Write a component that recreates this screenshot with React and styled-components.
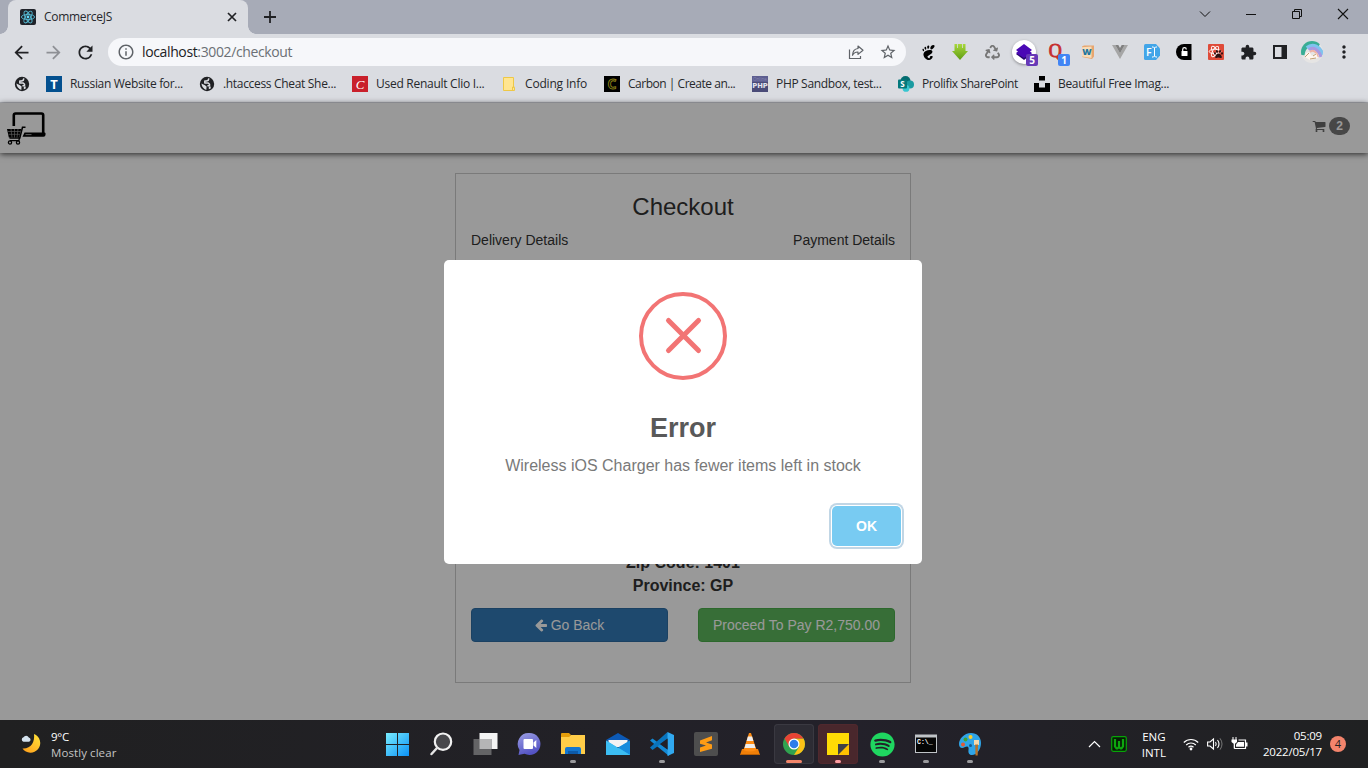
import React from "react";
import styled, { createGlobalStyle } from "styled-components";
import {
  MdArrowBack, MdArrowForward, MdRefresh, MdInfoOutline, MdStarBorder,
  MdExtension, MdMoreVert,
} from "react-icons/md";
import { SiGnome } from "react-icons/si";
import { FaSpotify, FaPaw, FaRecycle } from "react-icons/fa";

const Global = createGlobalStyle`
  * { box-sizing: border-box; }
  body { margin: 0; overflow: hidden; }
  button { font: inherit; }
  svg { display: block; flex: none; overflow: visible; }
`;

const ui = `"Open Sans", "Noto Sans", sans-serif`;
const arial = `"Liberation Sans", Arial, sans-serif`;

const Screen = styled.div`
  width: 100vw;
  height: 768px;
  display: flex;
  flex-direction: column;
  overflow: hidden;
  background: #999;
`;

/* ---------- browser frame ---------- */
const TabStrip = styled.header`
  height: 34px;
  flex: none;
  display: flex;
  padding: 0 2px 0 8px;
  background: #a7abb7;
`;
const Tab = styled.div`
  position: relative;
  width: 240px;
  height: 34px;
  display: flex;
  align-items: center;
  padding: 0 9px 0 12px;
  gap: 8px;
  background: #dadce1;
  border-radius: 8px 8px 0 0;
  &::before, &::after {
    content: "";
    position: absolute;
    bottom: 0;
    width: 8px;
    height: 8px;
  }
  &::before { left: -8px; background: radial-gradient(circle at 0 0, transparent 7.5px, #dadce1 8px); }
  &::after { right: -8px; background: radial-gradient(circle at 100% 0, transparent 7.5px, #dadce1 8px); }
`;
const Label = styled.span`
  font-family: ${ui};
  font-size: ${(p) => p.$size || 12}px;
  letter-spacing: ${(p) => p.$track ?? 0}px;
  line-height: 16px;
  color: ${(p) => p.$color || "#26282c"};
  white-space: nowrap;
`;
const TabTitle = styled(Label)` flex: 1; `;
const NewTab = styled.div`
  width: 44px;
  display: flex;
  align-items: center;
  justify-content: center;
`;
const WindowControls = styled.div`
  margin-left: auto;
  display: flex;
  height: 28px;
`;
const Control = styled.div`
  width: 46px;
  display: flex;
  align-items: center;
  justify-content: center;
`;
const Toolbar = styled.div`
  height: 36px;
  flex: none;
  display: flex;
  align-items: center;
  padding: 0 8px 0 5px;
  background: #dadce1;
  color: #202124;
`;
const NavButton = styled.div`
  width: 32px;
  height: 28px;
  display: flex;
  align-items: center;
  justify-content: center;
  color: ${(p) => (p.$off ? "#8e9095" : "#202124")};
`;
const AddressBar = styled.div`
  width: 798px;
  height: 28px;
  margin-left: 7px;
  padding: 0 2px 0 9px;
  display: flex;
  align-items: center;
  border-radius: 14px;
  background: #f6f7fa;
  color: #5f6368;
`;
const Url = styled.div`
  flex: 1;
  margin-left: 7px;
  font: 14px/20px ${ui};
  letter-spacing: -0.37px;
  color: #6b6f75;
  b { font-weight: 400; color: #202124; }
`;
const Extensions = styled.div`
  display: flex;
  margin-left: 6px;
`;
const Ext = styled.div`
  position: relative;
  width: 32px;
  height: 28px;
  display: flex;
  align-items: center;
  justify-content: center;
  flex: none;
`;
const Badge = styled.span`
  position: absolute;
  left: ${(p) => p.$left}px;
  top: 16px;
  width: 12px;
  height: 12px;
  border-radius: 2px;
  background: ${(p) => p.$color};
  color: #fff;
  font: bold 10px/12px ${ui};
  text-align: center;
`;
const RoundPlate = styled.div`
  width: 24px;
  height: 24px;
  display: flex;
  align-items: center;
  justify-content: center;
  border-radius: 50%;
  background: #fff;
  box-shadow: 0 1px 3px rgba(0, 0, 0, 0.35);
`;
const Bookmarks = styled.nav`
  height: 33px;
  flex: none;
  display: flex;
  align-items: center;
  padding: 0 0 5px 14px;
  background: #dadce1;
  border-bottom: 1px solid #b3b5bb;
`;
const Bookmark = styled.div`
  width: ${(p) => p.$w}px;
  display: flex;
  align-items: center;
  gap: 8px;
  flex: none;
`;

/* ---------- page ---------- */
const Page = styled.main`
  position: relative;
  height: 617px;
  flex: none;
  background: #fff;
  font-family: ${arial};
  color: #333;
`;
const Navbar = styled.div`
  height: 50px;
  display: flex;
  align-items: center;
  justify-content: space-between;
  padding: 0 18px 0 6px;
  background: #fff;
  box-shadow: 0 1px 6px rgba(0, 0, 0, 0.75);
`;
const Cart = styled.div`
  display: flex;
  align-items: center;
  gap: 3px;
  margin-top: -5px;
  color: #6a6a6a;
`;
const CartCount = styled.span`
  width: 21px;
  height: 18px;
  border-radius: 9px;
  background: #777;
  color: #fff;
  font: bold 12px/18px ${arial};
  text-align: center;
`;
const Card = styled.section`
  width: 456px;
  height: 510px;
  margin: 20px 0 0 455px;
  padding: 0 15px 40px;
  display: flex;
  flex-direction: column;
  border: 1px solid #ccc;
`;
const CardTitle = styled.h3`
  margin: 20px 0 10px;
  font-size: 24px;
  font-weight: 400;
  line-height: 26px;
  text-align: center;
`;
const Split = styled.div`
  display: flex;
  justify-content: space-between;
  font-size: 14px;
  line-height: 20px;
`;
const Address = styled.div`
  margin-top: auto;
  margin-bottom: 11px;
  font-size: 16px;
  font-weight: 700;
  line-height: 23px;
  text-align: center;
`;
const PageButton = styled.button`
  width: 197px;
  height: 34px;
  display: flex;
  align-items: center;
  justify-content: center;
  gap: 4px;
  padding: 0;
  border: 1px solid ${(p) => p.$edge};
  border-radius: 4px;
  background: ${(p) => p.$fill};
  color: #fff;
`;
const Overlay = styled.div`
  position: absolute;
  inset: 0;
  display: flex;
  justify-content: center;
  align-items: flex-start;
  padding: 157px 2px 0 0;
  background: rgba(0, 0, 0, 0.4);
`;
const Modal = styled.div`
  width: 478px;
  height: 304px;
  padding: 32px 21px 18px;
  display: flex;
  flex-direction: column;
  align-items: center;
  border-radius: 5px;
  background: #fff;
`;
const ModalTitle = styled.div`
  margin-top: 31px;
  font-size: 27px;
  font-weight: 700;
  line-height: 34px;
  color: #595959;
`;
const ModalText = styled.div`
  margin-top: 11px;
  font-size: 16px;
  line-height: 20px;
  color: #797979;
`;
const OkButton = styled.button`
  width: 69px;
  height: 40px;
  margin-top: auto;
  align-self: flex-end;
  padding: 0;
  border: 0;
  border-radius: 5px;
  background: #78cbf2;
  box-shadow: 0 0 0 1px #fff, 0 0 0 3px rgba(43, 114, 165, 0.29);
  color: #fff;
  font-size: 14px;
  font-weight: 700;
`;

/* ---------- taskbar ---------- */
const Taskbar = styled.footer`
  height: 48px;
  flex: none;
  display: flex;
  align-items: center;
  padding: 0 22px 0 21px;
  background: linear-gradient(90deg, #202021, #222127 45%, #23212a 62%, #202122);
`;
const Weather = styled.div`
  width: 354px;
  display: flex;
  align-items: center;
  gap: 9px;
`;
const Lines = styled.div`
  display: flex;
  flex-direction: column;
  padding-top: ${(p) => p.$drop || 0}px;
  text-align: ${(p) => p.$align || "left"};
`;
const Apps = styled.div` display: flex; `;
const AppSlot = styled.div`
  position: relative;
  width: 44.1px;
  height: 48px;
  display: flex;
  align-items: center;
  justify-content: center;
`;
const AppPlate = styled.div`
  width: 40px;
  height: 40px;
  display: flex;
  align-items: center;
  justify-content: center;
  border-radius: 4px;
  background: ${(p) => p.$fill || "transparent"};
  box-shadow: ${(p) => (p.$edge ? `inset 0 0 0 1px ${p.$edge}` : "none")};
`;
const Mark = styled.i`
  position: absolute;
  bottom: 5px;
  width: ${(p) => p.$w || 6}px;
  height: 3px;
  border-radius: 2px;
  background: ${(p) => p.$color || "#9a9a9d"};
`;
const Tray = styled.div`
  margin-left: auto;
  display: flex;
  align-items: center;
`;
const TrayIcons = styled.div`
  display: flex;
  gap: 8px;
  align-items: center;
  margin: 0 15px 0 17px;
`;
const TraySlot = styled.div`
  margin-right: ${(p) => p.$after}px;
`;
const Notice = styled.div`
  width: 16px;
  height: 16px;
  margin-left: 8px;
  border-radius: 50%;
  background: #f3846c;
  color: #222;
  font: 11px/16px ${ui};
  text-align: center;
`;

/* ---------- drawings ---------- */
const Svg = ({ w = 16, h = w, box, children }) => (
  <svg width={w} height={h} viewBox={box || `0 0 ${w} ${h}`} fill="none">{children}</svg>
);

const ReactMark = () => (
  <Svg>
    <rect width="16" height="16" rx="2" fill="#20232a" />
    <g stroke="#55b9d2" strokeWidth=".9">
      <ellipse cx="8" cy="8" rx="6.6" ry="2.6" />
      <ellipse cx="8" cy="8" rx="6.6" ry="2.6" transform="rotate(60 8 8)" />
      <ellipse cx="8" cy="8" rx="6.6" ry="2.6" transform="rotate(120 8 8)" />
    </g>
    <circle cx="8" cy="8" r="1.4" fill="#61dafb" />
  </Svg>
);
const Globe = () => (
  <Svg>
    <circle cx="8" cy="8" r="7.2" fill="#202124" />
    <path d="M9.800 2.400 9.300 4.200 7.600 5H5.800v1.900h3.400l1.300 1.400v1.500H8.400" stroke="#dadce1" strokeWidth="1.500" strokeLinejoin="round" />
    <path d="M2.400 7.500 6 9.300l1.600 1.300-.3 3.300Q3 12.500 2.400 7.500z" fill="#dadce1" />
    <path d="M9.800 10.500h1.900v1.900l-1.900.9z" fill="#dadce1" />
  </Svg>
);
const LetterTile = ({ fill, color, text, font, weight = 700, size = 13, italic, outline }) => (
  <Svg>
    <rect width="16" height="16" fill={fill} />
    <text x="8" y={outline ? 13 : 12.6} textAnchor="middle" fill={outline ? "none" : color} stroke={outline ? color : "none"} strokeWidth=".9" fontFamily={font || "Open Sans"} fontWeight={weight} fontSize={size} fontStyle={italic ? "italic" : "normal"}>{text}</text>
  </Svg>
);
const Folder = () => (
  <Svg>
    <path d="M2.500 1.500h10v10h1v3h-11z" fill="#ffe591" stroke="#eec846" />
    <path d="M11.500 14v-3h2" stroke="#eec846" />
  </Svg>
);
const PhpTile = () => (
  <Svg>
    <rect width="16" height="16" fill="#4a4b78" />
    <rect width="16" height="6" fill="#5d5e90" />
    <text x="8" y="4.8" textAnchor="middle" fontSize="4.5" fontFamily="Open Sans" fill="#8585b1">Online</text>
    <text x="8" y="12.2" textAnchor="middle" fontSize="6.8" fontWeight="700" fontFamily="DejaVu Sans" fill="#e4e4ef">PHP</text>
  </Svg>
);
const SharePoint = () => (
  <Svg>
    <circle cx="7.5" cy="5" r="5" fill="#036c70" />
    <circle cx="12" cy="8.5" r="4" fill="#1a9ba1" />
    <circle cx="8" cy="12.4" r="3.4" fill="#37c6d0" />
    <rect x="0" y="3.5" width="9" height="9" rx="1" fill="#03787c" />
    <text x="4.5" y="11" textAnchor="middle" fontSize="8" fontWeight="700" fontFamily="Open Sans" fill="#fff">S</text>
  </Svg>
);
const Unsplash = () => (
  <Svg><path d="M5 0h6v4.5H5zM0 7h5v4.5h6V7h5v9H0z" fill="#000" /></Svg>
);
const Share = () => (
  <Svg>
    <path d="M1.500 5.500v9h11V12" stroke="#5f6368" strokeWidth="1.200" />
    <path d="M10 2 15 6.200 10 10.400V8C7.500 7.900 5.600 9 4.500 11.300 4.700 7.500 6.500 4.800 10 4.500z" stroke="#5f6368" strokeWidth="1.200" strokeLinejoin="round" />
  </Svg>
);
const DownArrow = () => (
  <Svg>
    <defs><linearGradient id="lime" x2="0" y2="1"><stop stopColor="#a8d83c" /><stop offset="1" stopColor="#5f9c12" /></linearGradient></defs>
    <path d="M2.500 0h11v7H16l-8 9-8-9h2.500z" fill="url(#lime)" />
    <path d="M5.500 0v4M10.500 0v4" stroke="#dadce1" strokeWidth=".8" />
  </Svg>
);
const Layers = () => (
  <Svg>
    <path d="M8 4.5 16 10l-8 6-8-6z" fill="#26066b" />
    <path d="M8 0l8 6-2 1.500 2 1.500-8 5-8-5 2-1.500L0 6z" fill="#4a08b5" />
  </Svg>
);
const QMark = () => (
  <Svg><text x="7.3" y="12.5" textAnchor="middle" fontFamily="Liberation Serif" fontSize="18" fontWeight="400" stroke="#c62f30" strokeWidth=".9" fill="#c62f30">Q</text></Svg>
);
const WBook = () => (
  <Svg>
    <path d="M2 2.500 4 1.500h10v11l-2 2.500-10-2z" fill="#e7a66f" />
    <path d="M2 3.200l9.500-.7v11.500L2 12.500z" fill="#f7dcb8" />
    <text x="6.900" y="11.400" textAnchor="middle" fontFamily="Open Sans" fontSize="9" fontWeight="800" fill="#22769f">W</text>
  </Svg>
);
const Vue = () => (
  <Svg>
    <path d="M0 1h3.300L8 9.200 12.700 1H16L8 15z" fill="#a6a6a6" />
    <path d="M3.300 1h3L8 4l1.700-3h3L8 9.200z" fill="#808080" />
  </Svg>
);
const FontTag = () => (
  <Svg>
    <path d="M1.500 0h10.500L16 4.500v7L12 16H1.500Q0 16 0 14.500v-13Q0 0 1.500 0z" fill="#42a5e8" />
    <text x="2" y="11.700" fontFamily="Open Sans" fontWeight="600" fontSize="10.500" fill="#fff">F</text>
    <path d="M8 3h1.500l1 1 1-1H13M10.500 4v8M8 13h1.500l1-1 1 1H13" stroke="#fff" />
  </Svg>
);
const LockTag = () => (
  <Svg>
    <path d="M8 0h7.500v16H8A8 8 0 0 1 8 0z" fill="#000" />
    <rect x="5.500" y="7" width="6" height="5" rx=".6" fill="#fff" />
    <path d="M6.700 7V5.500a1.800 1.800 0 0 1 3.600 0" stroke="#fff" strokeWidth="1.200" />
  </Svg>
);
const BugTile = () => (
  <Svg>
    <rect width="16" height="16" rx="1" fill="#df4b39" />
    <g stroke="#fff" strokeWidth=".9"><ellipse cx="7" cy="7.500" rx="5.800" ry="2.300" /><ellipse cx="7" cy="7.500" rx="5.800" ry="2.300" transform="rotate(60 7 7.500)" /><ellipse cx="7" cy="7.500" rx="5.800" ry="2.300" transform="rotate(120 7 7.500)" /></g>
    <g transform="translate(6 5.500)"><FaPaw size={9} color="#2b1111" /></g>
  </Svg>
);
const Avatar = () => (
  <Svg w={22}>
    <defs><clipPath id="face"><circle cx="11" cy="11" r="11" /></clipPath></defs>
    <g clipPath="url(#face)">
      <rect width="22" height="22" fill="#e6e5e4" />
      <path d="M0 14C1 2 12-1 19 3" stroke="#38ad95" strokeWidth="7" />
      <path d="M6 7C12 2 19 6 22 14" stroke="#7fc3ee" strokeWidth="4" />
      <path d="M8 9C12 5 18 9 20 16" stroke="#a99ae0" strokeWidth="3" />
      <path d="M9 11c3-3 7 0 8 5" stroke="#f0b3a5" strokeWidth="2" />
      <path d="M4 16c0-4 3-6 5-4l2 3 4-3 2 5-8 2z" fill="#fff6ef" />
      <path d="M4 16l4-4M9 18l6-1M12 15l3-2" stroke="#bf9f74" />
    </g>
  </Svg>
);
const ShopLogo = () => (
  <Svg w={40} h={32}>
    <path d="M7.800 14V3.200Q7.800 1.500 9.500 1.500h26Q37.200 1.500 37.200 3.200V22" stroke="#000" strokeWidth="2.600" />
    <path d="M18.500 20.500H38.500q1 0 1 1v1.300q0 2-2 2H16.500z" fill="#000" />
    <path d="M19.500 22.600h6" stroke="#999" strokeWidth="1" />
    <path d="M19.500 15.200h-3L13.800 26H3.500" stroke="#000" strokeWidth="1.500" />
    <path d="M1 17h14.200l-2 8.500H2.800z" fill="#000" />
    <path d="M2 19.500h12.500M2.500 22.300h11.500M5 17l1 8.500M8.500 17v8.500M12 17l-1 8.500" stroke="#999" strokeWidth=".7" />
    <path d="M13.500 26l-.7 2.700H3.800" stroke="#000" strokeWidth="1.300" />
    <circle cx="4" cy="30.500" r="1.600" stroke="#000" strokeWidth="1.300" />
    <circle cx="12" cy="30.500" r="1.600" stroke="#000" strokeWidth="1.300" />
  </Svg>
);
const CartIcon = () => (
  <svg width="14" height="14" viewBox="0 0 1664 1792" fill="currentColor">
    <path d="M640 1536q0 52-38 90t-90 38-90-38-38-90 38-90 90-38 90 38 38 90zm896 0q0 52-38 90t-90 38-90-38-38-90 38-90 90-38 90 38 38 90zm128-1088v512q0 24-16.500 42.500t-40.500 21.500l-1044 122q13 60 13 70 0 16-24 64h920q26 0 45 19t19 45-19 45-45 19h-1024q-26 0-45-19t-19-45q0-11 8-31.500t16-36 21.500-40 15.500-29.500l-177-823h-204q-26 0-45-19t-19-45 19-45 45-19h256q16 0 28.500 6.500t19.500 15.500 13 24.500 8 26 5.500 29.500 4.500 26h1201q26 0 45 19t19 45z" />
  </svg>
);
const BackIcon = () => (
  <svg width="12" height="14" viewBox="0 0 1536 1792" fill="currentColor">
    <path d="M1536 896v128q0 53-32.500 90.500t-84.500 37.500h-704l293 294q38 36 38 90t-38 90l-75 76q-37 37-90 37-52 0-91-37l-651-652q-37-37-37-90 0-52 37-91l651-650q38-38 91-38 52 0 90 38l75 74q38 38 38 91t-38 91l-293 293h704q52 0 84.500 37.500t32.500 90.500z" />
  </svg>
);
const ErrorIcon = () => (
  <Svg w={88}>
    <circle cx="44" cy="44" r="42" stroke="#f27474" strokeWidth="4" />
    <path d="M29.500 28.500 59.500 58.500M59.500 28.500 29.500 58.500" stroke="#f27474" strokeWidth="5" strokeLinecap="round" />
  </Svg>
);
const Moon = () => (
  <Svg w={21} h={20}>
    <defs><linearGradient id="moon" x1="1" x2=".3" y2="1"><stop stopColor="#ffe53b" /><stop offset="1" stopColor="#ffa51e" /></linearGradient></defs>
    <path d="M13 0a9.700 9.700 0 1 1-11.500 14.500C10 15 14 8 13 0z" fill="url(#moon)" />
    <path d="M2.500 7.800a2.400 2.400 0 0 1 0-4.600 3 3 0 0 1 5.300.2 2.300 2.300 0 0 1 .2 4.400z" fill="#d4e2ee" />
  </Svg>
);
const WindowsIcon = () => (
  <Svg w={23}>
    <defs><linearGradient id="win" x2="1" y2="1"><stop stopColor="#79edff" /><stop offset="1" stopColor="#0b91f5" /></linearGradient></defs>
    <path d="M0 0h11v11H0zM12 0h11v11H12zM0 12h11v11H0zM12 12h11v11H12z" fill="url(#win)" />
  </Svg>
);
const SearchIcon = () => (
  <Svg w={24}>
    <circle cx="14" cy="9.700" r="8.200" fill="#47474b" stroke="#f1f1f1" strokeWidth="2.200" />
    <path d="M8 16 2.500 22" stroke="#e4e4e4" strokeWidth="2.500" strokeLinecap="round" />
  </Svg>
);
const TaskView = () => (
  <Svg w={24}>
    <rect x="6.500" y="1" width="18" height="16" fill="#f4f4f4" />
    <path d="M.5 7h18v16H.5z" fill="#646466" />
    <path d="M6.500 7h12v10h-12z" fill="#b5b5b6" />
  </Svg>
);
const ChatIcon = () => (
  <Svg w={24}>
    <defs><linearGradient id="chat" x2=".4" y2="1"><stop stopColor="#9da0e5" /><stop offset="1" stopColor="#5453c4" /></linearGradient></defs>
    <path d="M12.500 1a11 11 0 1 1-5 20.800L1.500 23l1-5a11 11 0 0 1 10-17z" fill="url(#chat)" />
    <rect x="6.500" y="7" width="9.500" height="10" rx="1" fill="#fff" />
    <path d="M16.500 10.500 19.300 8v8l-2.800-2.500z" fill="#fff" />
  </Svg>
);
const FilesIcon = () => (
  <Svg w={24}>
    <path d="M0 2q0-1 1-1h7l2 2-2 3H0z" fill="#e59e0b" />
    <path d="M0 5h8l2-2h14v19H0z" fill="#ffcd48" />
    <path d="M4 22v-5q0-2 2-2h12q2 0 2 2v5z" fill="#1376cf" />
    <path d="M7 22v-3h10v3z" fill="#0d5aa8" />
  </Svg>
);
const MailIcon = () => (
  <Svg w={24}>
    <path d="M0 8 12 1l12 7-12 7z" fill="#0c59b5" />
    <path d="M2.500 8h19v7H2.500z" fill="#f3f3f3" />
    <path d="M0 8.500 12 16l12-7.500V23H0z" fill="#2fb4ee" />
    <path d="M24 8.500V23L12 15.500z" fill="#168bdc" />
    <path d="M0 23V8.500L24 23z" fill="#3cbdf2" />
  </Svg>
);
const CodeIcon = () => (
  <Svg w={24}>
    <path d="M0 8.500 2.500 6.500 19 18.500V24z" fill="#1389d4" />
    <path d="M0 15.500 17.500 0 19 6 2.500 18z" fill="#0974bd" />
    <path d="M17.500 0 24 3v18l-6.500 3z" fill="#31a9f0" />
    <path d="M17.500 6.500v11L10 12z" fill="#222127" />
  </Svg>
);
const SublimeIcon = () => (
  <Svg w={24}>
    <rect width="24" height="24" rx="2" fill="#4e4e4e" />
    <path d="M6 8.500 18 4v4.300L12 10.500 18 12.500v4.300L6 20v-4.500L12 13.500 6 11.800z" fill="#ff9c15" />
  </Svg>
);
const VlcIcon = () => (
  <Svg w={24}>
    <path d="M4 17h16l2 6H2z" fill="#f07f08" />
    <path d="M11 1h2L18.500 18q-6.500 3-13 0z" fill="#ff8d13" />
    <path d="M9.900 4.500h4.200l1.300 4.500H8.600zM7.700 12h8.600l1.200 4h-11z" fill="#ededed" />
    <path d="M2 22.500h20" stroke="#b95f05" />
  </Svg>
);
const ChromeIcon = () => (
  <Svg w={24}>
    <circle cx="12" cy="12" r="11" fill="#30a350" />
    <path d="M12 6.500h9.500A11 11 0 0 1 12 23l5-8z" fill="#fbc116" />
    <path d="M2.500 6.500a11 11 0 0 1 19 0H12l-4.700 8.200z" fill="#e94335" />
    <circle cx="12" cy="12" r="5.500" fill="#fff" /><circle cx="12" cy="12" r="4.300" fill="#2f7de9" />
  </Svg>
);
const NotesIcon = () => (
  <Svg w={24}>
    <path d="M1 1h22v22H1z" fill="#ffdb05" />
    <path d="M23 12v11H12V12z" fill="#ffc000" />
    <path d="M12 23V12h11z" fill="#3f4045" />
  </Svg>
);
const TerminalIcon = () => (
  <Svg w={24}>
    <rect x="1" y="2.500" width="22" height="18.500" fill="#bfc3c7" />
    <rect x="2" y="5.500" width="20" height="14.500" fill="#050505" />
    <text x="3" y="12" fontFamily="Liberation Mono" fontSize="6.500" fontWeight="700" fill="#fff">C:\_</text>
  </Svg>
);
const PaintIcon = () => (
  <Svg w={24}>
    <path d="M13 1C6 1 1 7 1 12c0 4 3 5 6 3 3-1.500 4 0 3.500 3-.6 3 1 5 3.500 5 5 0 9-6 9-12S19 1 13 1z" fill="#2fa5e8" />
    <circle cx="7.500" cy="7.500" r="2" fill="#41a336" /><circle cx="12.500" cy="5" r="2" fill="#ffcf24" /><circle cx="5" cy="12.500" r="2" fill="#e15a35" />
    <path d="M16 8h5v5h-5z" fill="#f2d9ae" /><path d="M17.200 12.500h2.800l-.3 11h-2.200z" fill="#b5722a" />
    <circle cx="12.500" cy="13.500" r="1.500" fill="#17598d" />
  </Svg>
);
const WampIcon = () => (
  <Svg>
    <rect x=".7" y=".7" width="14.600" height="14.600" rx="1.500" fill="#061d06" stroke="#08a408" strokeWidth="1.200" />
    <path d="M4 3v7.500l1.500 2h1L8 11l1.500 1.500h1l1.500-2V3M8 5v6" stroke="#0ea60e" strokeWidth="2.200" />
  </Svg>
);
const Wifi = () => (
  <Svg w={16} h={14}>
    <path d="M.8 5.500a10.200 10.200 0 0 1 14.400 0M3.200 8a6.800 6.800 0 0 1 9.600 0M5.500 10.300a3.600 3.600 0 0 1 5 0" stroke="#fff" strokeWidth="1.200" />
    <circle cx="8" cy="12" r="1.400" fill="#fff" />
  </Svg>
);
const Speaker = () => (
  <Svg w={16} h={14}>
    <path d="M.6 5v4h2.400l3.500 3V2L3 5z" stroke="#fff" strokeWidth="1.100" />
    <path d="M8.500 5q1.400 2 0 4M10.500 3q3 4 0 8" stroke="#fff" strokeWidth="1.100" />
    <path d="M13 1.300q4 5.700 0 11.400" stroke="#777" />
  </Svg>
);
const Battery = () => (
  <Svg w={17} h={14}>
    <path d="M2 0v3M5 0v3" stroke="#fff" />
    <path d="M.5 2.500h5.500v2.500L4 6.700V11.500H2.700V6.700L.5 5z" fill="#fff" />
    <path d="M7.500 3h7v8.500H3.200" stroke="#fff" strokeWidth="1.200" />
    <path d="M7 5h6v4.800H5V7.500z" fill="#fff" /><path d="M15 5.500h1.500v4H15z" fill="#fff" />
  </Svg>
);

const bookmarks = [
  { w: 32, icon: <Globe /> },
  { w: 153, icon: <LetterTile fill="#03508f" color="#fff" text="T" />, text: "Russian Website for...", track: -0.33 },
  { w: 153, icon: <Globe />, text: ".htaccess Cheat She...", track: -0.32 },
  { w: 149, icon: <LetterTile fill="#c9202b" color="#fff" text="C" font="Liberation Serif" italic weight={400} />, text: "Used Renault Clio I...", track: -0.27 },
  { w: 103, icon: <Folder />, text: "Coding Info", track: -0.18 },
  { w: 148, icon: <LetterTile fill="#000" color="#8e8117" text="C" outline size={14} />, text: "Carbon | Create an...", track: -0.48 },
  { w: 146, icon: <PhpTile />, text: "PHP Sandbox, test...", track: -0.32 },
  { w: 136, icon: <SharePoint />, text: "Prolifix SharePoint", track: -0.38 },
  { w: 140, icon: <Unsplash />, text: "Beautiful Free Imag...", track: -0.32 },
];

const apps = [
  { icon: <WindowsIcon /> },
  { icon: <SearchIcon /> },
  { icon: <TaskView /> },
  { icon: <ChatIcon /> },
  { icon: <FilesIcon />, mark: {} },
  { icon: <MailIcon /> },
  { icon: <CodeIcon />, mark: {} },
  { icon: <SublimeIcon /> },
  { icon: <VlcIcon /> },
  { icon: <ChromeIcon />, fill: "#2d2c34", edge: "#3a3941", mark: { w: 16, color: "#f3866b" } },
  { icon: <NotesIcon />, fill: "#49272c", edge: "#50292e", mark: { color: "#ff9da2" } },
  { icon: <FaSpotify size={25} color="#1fd660" />, mark: {} },
  { icon: <TerminalIcon />, mark: {} },
  { icon: <PaintIcon />, mark: {} },
];

export default function App() {
  return (
    <Screen>
      <Global />
      <TabStrip>
        <Tab>
          <ReactMark />
          <TabTitle $size={12} $track={-0.3}>CommerceJS</TabTitle>
          <Svg w={14}><path d="m3 3 8 8M11 3l-8 8" stroke="#202124" strokeWidth="1.700" /></Svg>
        </Tab>
        <NewTab><Svg w={14}><path d="M7 1v12M1 7h12" stroke="#202124" strokeWidth="1.800" /></Svg></NewTab>
        <WindowControls>
          <Control><Svg w={12}><path d="m1 3.500 5 5 5-5" stroke="#111" /></Svg></Control>
          <Control><Svg w={10}><path d="M0 5.500h10" stroke="#111" /></Svg></Control>
          <Control><Svg w={10}><path d="M.5 2.500h7v7h-7zM2.500 2.500v-2h7v7h-2" stroke="#111" /></Svg></Control>
          <Control><Svg w={12}><path d="m1 1 10 10M11 1 1 11" stroke="#111" strokeWidth="1.100" /></Svg></Control>
        </WindowControls>
      </TabStrip>

      <Toolbar>
        <NavButton><MdArrowBack size={21} /></NavButton>
        <NavButton $off><MdArrowForward size={21} /></NavButton>
        <NavButton><MdRefresh size={21} /></NavButton>
        <AddressBar>
          <MdInfoOutline size={18} />
          <Url><b>localhost</b>:3002/checkout</Url>
          <Ext><Share /></Ext>
          <Ext><MdStarBorder size={18} /></Ext>
        </AddressBar>
        <Extensions>
          <Ext><SiGnome size={15} color="#000" /></Ext>
          <Ext><DownArrow /></Ext>
          <Ext><FaRecycle size={15} color="#777" /></Ext>
          <Ext><RoundPlate><Layers /></RoundPlate><Badge $left={18} $color="#6739b7">5</Badge></Ext>
          <Ext><QMark /><Badge $left={18} $color="#4285f4">1</Badge></Ext>
          <Ext><WBook /></Ext>
          <Ext><Vue /></Ext>
          <Ext><FontTag /></Ext>
          <Ext><LockTag /></Ext>
          <Ext><BugTile /></Ext>
          <Ext><MdExtension size={17} /></Ext>
          <Ext><Svg w={14}><rect x="1" y="1" width="12" height="12" stroke="#202124" strokeWidth="2" /><path d="M8.500 1H13v12H8.500z" fill="#202124" /></Svg></Ext>
          <Ext><Avatar /></Ext>
          <Ext><MdMoreVert size={20} /></Ext>
        </Extensions>
      </Toolbar>

      <Bookmarks>
        {bookmarks.map((b, i) => (
          <Bookmark key={i} $w={b.w}>
            {b.icon}
            {b.text && <Label $track={b.track}>{b.text}</Label>}
          </Bookmark>
        ))}
      </Bookmarks>

      <Page>
        <Navbar>
          <ShopLogo />
          <Cart><CartIcon /><CartCount>2</CartCount></Cart>
        </Navbar>
        <Card>
          <CardTitle>Checkout</CardTitle>
          <Split><span>Delivery Details</span><span>Payment Details</span></Split>
          <Address>
            <div>Zip Code: 1401</div>
            <div>Province: GP</div>
          </Address>
          <Split>
            <PageButton $fill="#337ab7" $edge="#2e6da4"><BackIcon />Go Back</PageButton>
            <PageButton $fill="#5cb85c" $edge="#4cae4c">Proceed To Pay R2,750.00</PageButton>
          </Split>
        </Card>
        <Overlay>
          <Modal>
            <ErrorIcon />
            <ModalTitle>Error</ModalTitle>
            <ModalText>Wireless iOS Charger has fewer items left in stock</ModalText>
            <OkButton>OK</OkButton>
          </Modal>
        </Overlay>
      </Page>

      <Taskbar>
        <Weather>
          <Moon />
          <Lines $drop={2}>
            <Label $size={11.5} $color="#fff" $track={-0.3}>9°C</Label>
            <Label $size={11.5} $color="#c4c4c4" $track={0.08}>Mostly clear</Label>
          </Lines>
        </Weather>
        <Apps>
          {apps.map((a, i) => (
            <AppSlot key={i}>
              <AppPlate $fill={a.fill} $edge={a.edge}>{a.icon}</AppPlate>
              {a.mark && <Mark $w={a.mark.w} $color={a.mark.color} />}
            </AppSlot>
          ))}
        </Apps>
        <Tray>
          <TraySlot $after={10}><Svg w={13} h={8}><path d="m1 7 5.500-5.500L12 7" stroke="#fff" strokeWidth="1.200" /></Svg></TraySlot>
          <TraySlot $after={15}><WampIcon /></TraySlot>
          <Lines $align="center" $drop={2}>
            <Label $size={11.5} $color="#fff">ENG</Label>
            <Label $size={11.5} $color="#fff">INTL</Label>
          </Lines>
          <TrayIcons><Wifi /><Speaker /><Battery /></TrayIcons>
          <Lines $align="right">
            <Label $size={11.5} $color="#fff" $track={-0.2}>05:09</Label>
            <Label $size={11.5} $color="#fff" $track={-0.2}>2022/05/17</Label>
          </Lines>
          <Notice>4</Notice>
        </Tray>
      </Taskbar>
    </Screen>
  );
}
